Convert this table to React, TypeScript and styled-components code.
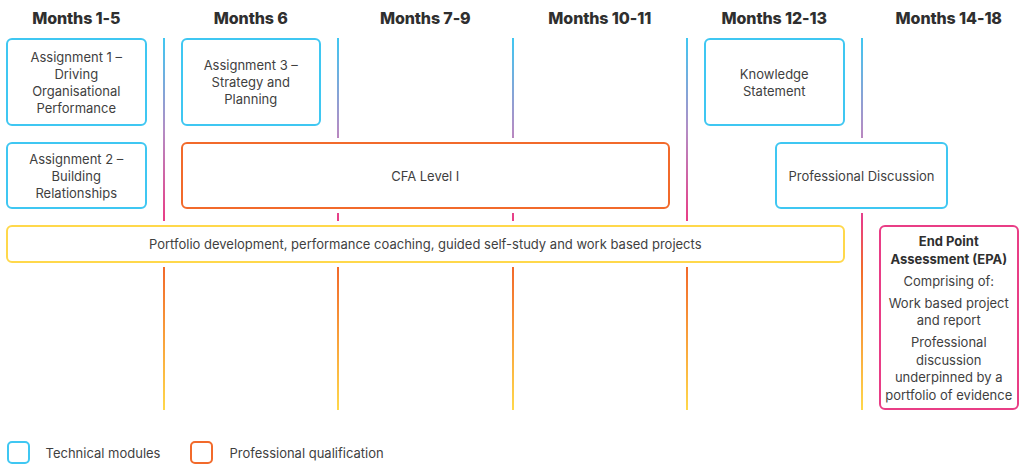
import React from "react";
import styled, { createGlobalStyle } from "styled-components";

const C = {
  cyan: "#3fc7f2",
  orange: "#f26a2b",
  yellow: "#ffd84b",
  pink: "#e93d86",
  text: "#3f3f3f",
  head: "#2f2f2f",
};

const Global = createGlobalStyle`
  html, body { margin: 0; padding: 0; background: #fff; overflow: hidden; }
  body { font-family: Inter, "Noto Sans", Arial, sans-serif; color: ${C.text}; }
`;

const Page = styled.div`
  width: 1024px;
  height: 468px;
  overflow: hidden;
`;

const Board = styled.div`
  display: grid;
  grid-template-columns: repeat(12, 87.25px);
  grid-template-rows: 38px 88px 16px 67px 16px 38px 147px;
  margin-left: -11px;
`;

const Heading = styled.div<{ $col: number }>`
  grid-row: 1;
  grid-column: ${(p) => p.$col * 2 - 1} / span 2;
  display: flex;
  align-items: center;
  justify-content: center;
  padding-bottom: 3px;
  font-size: 16px;
  font-weight: 800;
  color: ${C.head};
  letter-spacing: -0.1px;
`;

const Divider = styled.div<{ $col: number }>`
  grid-row: 2 / 8;
  grid-column: ${(p) => p.$col * 2};
  justify-self: end;
  width: 2px;
  margin-right: -1px;
  background: linear-gradient(
    to bottom,
    ${C.cyan} 0%,
    #b48cc4 25%,
    ${C.pink} 49%,
    ${C.orange} 62%,
    ${C.yellow} 100%
  );
`;

const Box = styled.div<{ $color: string; $col: string; $row: string; $inset?: string }>`
  grid-column: ${(p) => p.$col};
  grid-row: ${(p) => p.$row};
  margin: 0 ${(p) => p.$inset ?? "17px"};
  position: relative;
  z-index: 1;
  box-sizing: border-box;
  border: 2.5px solid ${(p) => p.$color};
  border-radius: 6px;
  background: #fff;
  box-shadow: 0 0 0 4px #fff;
  display: flex;
  align-items: center;
  justify-content: center;
  text-align: center;
  font-size: 13px;
  line-height: 17px;
  padding-top: 1px;
  color: ${C.text};
`;

const EpaBox = styled(Box)`
  flex-direction: column;
  justify-content: flex-start;
  padding-top: 6px;
  gap: 4.5px;
  line-height: 17.5px;
`;

const Para = styled.p<{ $bold?: boolean }>`
  margin: 0;
  font-weight: ${(p) => (p.$bold ? 700 : 400)};
  color: ${(p) => (p.$bold ? C.head : C.text)};
`;

const Legend = styled.div`
  display: flex;
  align-items: center;
  gap: 30px;
  margin-top: 31px;
  padding-left: 6.5px;
`;

const LegendItem = styled.div`
  display: flex;
  align-items: center;
  gap: 16px;
  font-size: 13px;
  color: ${C.text};
`;

const Swatch = styled.span<{ $color: string }>`
  width: 23px;
  height: 23px;
  box-sizing: border-box;
  border: 2.5px solid ${(p) => p.$color};
  border-radius: 5px;
`;

const months = ["Months 1-5", "Months 6", "Months 7-9", "Months 10-11", "Months 12-13", "Months 14-18"];

export default function App() {
  return (
    <Page>
      <Global />
      <Board>
        {months.map((m, i) => (
          <Heading key={m} $col={i + 1}>
            {m}
          </Heading>
        ))}
        {[1, 2, 3, 4, 5].map((n) => (
          <Divider key={n} $col={n} />
        ))}

        <Box $color={C.cyan} $col="1 / 3" $row="2">
          Assignment 1 –<br />
          Driving
          <br />
          Organisational
          <br />
          Performance
        </Box>
        <Box $color={C.cyan} $col="3 / 5" $row="2">
          Assignment 3 –<br />
          Strategy and
          <br />
          Planning
        </Box>
        <Box $color={C.cyan} $col="9 / 11" $row="2">
          Knowledge
          <br />
          Statement
        </Box>

        <Box $color={C.cyan} $col="1 / 3" $row="4">
          Assignment 2 –<br />
          Building
          <br />
          Relationships
        </Box>
        <Box $color={C.orange} $col="3 / 9" $row="4">
          CFA Level I
        </Box>
        <Box $color={C.cyan} $col="10 / 12" $row="4" $inset="1px">
          Professional Discussion
        </Box>

        <Box $color={C.yellow} $col="1 / 11" $row="6">
          Portfolio development, performance coaching, guided self-study and work based projects
        </Box>
        <EpaBox $color={C.pink} $col="11 / 13" $row="6 / 8">
          <Para $bold>
            End Point
            <br />
            Assessment (EPA)
          </Para>
          <Para>Comprising of:</Para>
          <Para>
            Work based project
            <br />
            and report
          </Para>
          <Para>
            Professional
            <br />
            discussion
            <br />
            underpinned by a
            <br />
            portfolio of evidence
          </Para>
        </EpaBox>
      </Board>
      <Legend>
        <LegendItem>
          <Swatch $color={C.cyan} />
          Technical modules
        </LegendItem>
        <LegendItem>
          <Swatch $color={C.orange} />
          Professional qualification
        </LegendItem>
      </Legend>
    </Page>
  );
}
